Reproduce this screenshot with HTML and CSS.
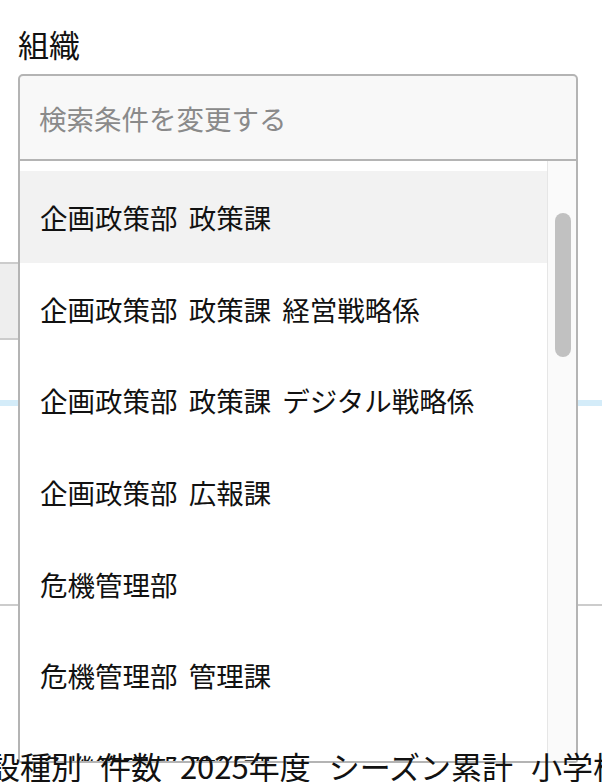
FILE: index.html
```html
<!DOCTYPE html>
<html lang="ja">
<head>
    <meta charset="UTF-8">
    <meta name="viewport" content="width=device-width, initial-scale=1.0">
    <title>組織の選択</title>
    <link rel="stylesheet" href="styles.css">
</head>
<body>
    <div class="page">
        <div class="field">
            <label class="field-label">組織</label>
            <div class="select-wrap">
                <div class="select-box"></div>
                <div class="dropdown">
                    <div class="search">
                        <input type="text" class="search-input" placeholder="検索条件を変更する">
                    </div>
                    <div class="list">
                        <ul class="options">
                            <li class="option active">企画政策部 政策課</li>
                            <li class="option">企画政策部 政策課 経営戦略係</li>
                            <li class="option">企画政策部 政策課 デジタル戦略係</li>
                            <li class="option">企画政策部 広報課</li>
                            <li class="option">危機管理部</li>
                            <li class="option">危機管理部 管理課</li>
                            <li class="option">危機管理部 防災課</li>
                            <li class="option">危機管理部 防災課 防災係</li>
                        </ul>
                        <div class="scroll-track">
                            <div class="scroll-thumb"></div>
                        </div>
                    </div>
                </div>
            </div>
        </div>
        <div class="toolbar">
            <div class="tool-btn"></div>
        </div>
        <div class="tabs-line"></div>
        <div class="divider"></div>
        <h2 class="summary-title">施設種別 件数 2025年度 シーズン累計 小学校</h2>
    </div>
</body>
</html>
```

FILE: styles.css
```css
:root {
    --border-color: #b4b4b4;
    --text-color: #111;
    --muted-color: #8a8a8a;
    --hover-bg: #f2f2f2;
    --search-bg: #f8f8f8;
    --accent-line: #d4ecf9;
}
html, body {
    overflow: hidden;
}
body {
    margin: 0;
    padding: 0;
    background: #fff;
    color: var(--text-color);
    font-family: "Noto Sans CJK JP", "Noto Sans", sans-serif;
}
.page {
    padding-top: 22px;
}
.field {
    padding: 0 24px 0 18px;
}
.field-label {
    display: block;
    font-size: 31px;
    line-height: 44px;
    margin-bottom: 8px;
}
.select-wrap {
    position: relative;
    height: 87px;
}
.select-box {
    height: 100%;
    border: 2px solid #ccc;
    box-sizing: border-box;
}
/* the open dropdown covers the select and the rows under it */
.dropdown {
    position: absolute;
    top: 0;
    left: 0;
    right: 0;
    z-index: 1;
    background: #fff;
}
.search {
    height: 87px;
    box-sizing: border-box;
    border: 2px solid var(--border-color);
    border-radius: 5px 5px 0 0;
    background: var(--search-bg);
    display: flex;
    align-items: center;
}
.search-input {
    width: 100%;
    border: none;
    background: transparent;
    font-family: inherit;
    font-size: 27.5px;
    padding: 0 19px;
    outline: none;
    color: var(--text-color);
}
.search-input::placeholder {
    color: var(--muted-color);
}
.list {
    display: flex;
    height: 602px;
    box-sizing: border-box;
    border: 2px solid var(--border-color);
    border-top: none;
    border-radius: 0 0 3px 3px;
    overflow: hidden;
}
.options {
    flex: 1;
    list-style: none;
    margin: 0;
    padding: 10px 0 0;
}
.option {
    height: 91.7px;
    display: flex;
    align-items: center;
    padding: 0 20px;
    font-size: 27.5px;
    word-spacing: 5px;
    white-space: nowrap;
}
.option.active {
    background: var(--hover-bg);
}
.scroll-track {
    width: 28px;
    flex-shrink: 0;
    background: #fafafa;
    border-left: 1px solid #e6e6e6;
}
.scroll-thumb {
    width: 16px;
    height: 144px;
    margin: 52px 0 0 7px;
    background: #c1c1c1;
    border-radius: 8px;
}
.toolbar {
    margin-top: 101px;
}
.tool-btn {
    width: 300px;
    height: 78px;
    box-sizing: border-box;
    background: #eee;
    border-top: 2px solid #ccc;
    border-bottom: 2px solid #ccc;
}
.tabs-line {
    margin-top: 60px;
    height: 6px;
    background: var(--accent-line);
}
.divider {
    margin-top: 198px;
    height: 2px;
    background: #ccc;
}
.summary-title {
    position: relative;
    z-index: 2;
    margin: 140px 0 0 -42px;
    font-size: 31px;
    font-weight: normal;
    line-height: 40px;
    word-spacing: 11px;
    white-space: nowrap;
}
```
